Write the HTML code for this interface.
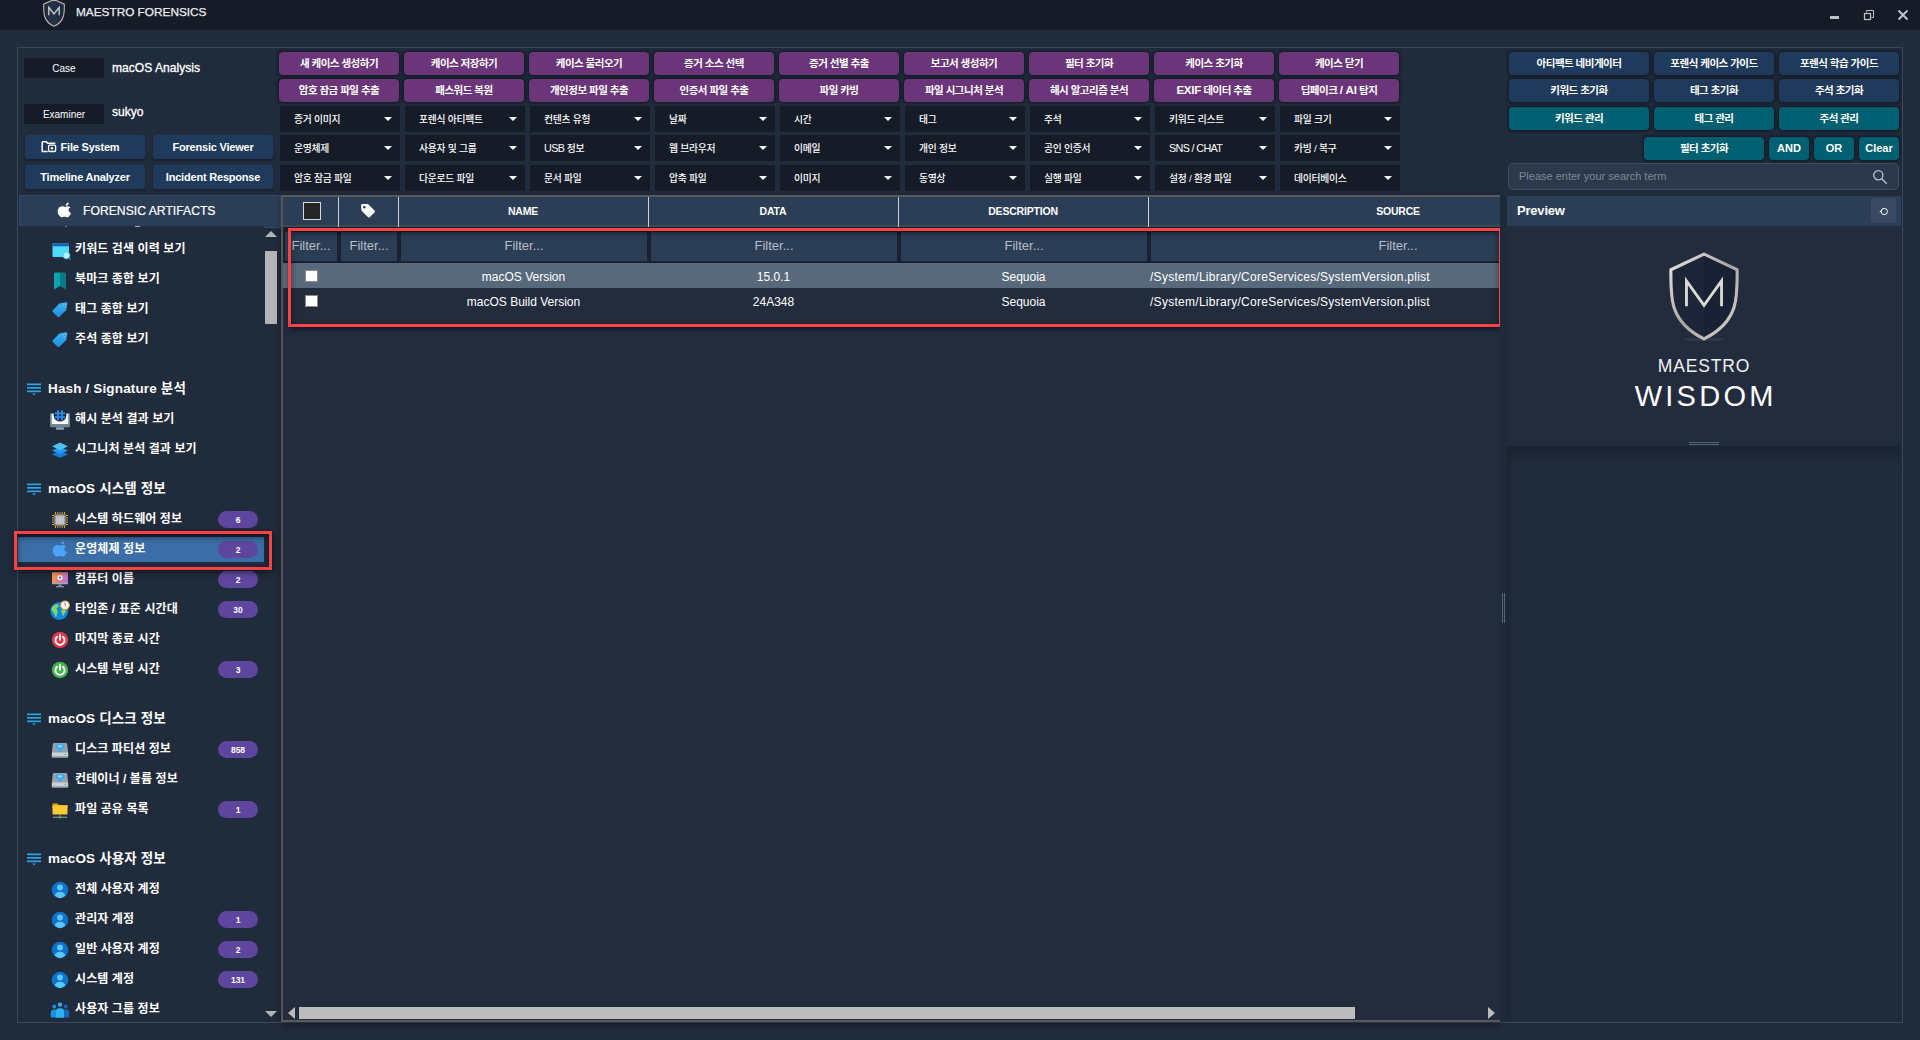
<!DOCTYPE html>
<html lang="ko">
<head>
<meta charset="utf-8">
<title>MAESTRO FORENSICS</title>
<style>
*{box-sizing:border-box;margin:0;padding:0}
html,body{width:1920px;height:1040px;overflow:hidden;background:#202b3b;}
body{font-family:"Liberation Sans","Noto Sans CJK KR",sans-serif;color:#fff;position:relative;font-size:12px}
.abs{position:absolute}
#titlebar{left:0;top:0;width:1920px;height:30px;background:#161b28}
#brand{left:76px;top:4.3px;height:16px;line-height:16px;font-size:11.8px;letter-spacing:0;color:#eceef1;white-space:nowrap;-webkit-text-stroke:0.25px #eceef1}
#frame{left:17px;top:47px;width:1886px;height:976px;border:1px solid #384759}
/* case info */
.lbl{background:#161b28;width:80px;height:20px;line-height:21px;text-align:center;font-size:10px;color:#fff}
.val{font-size:12.1px;font-weight:normal;-webkit-text-stroke:0.3px #fff;color:#fff;line-height:16px;white-space:nowrap}
/* buttons */
.btn{box-shadow:0 0 3px 0.3px rgba(8,12,20,.6);height:23px;line-height:23px;text-align:center;border-radius:4px;font-weight:bold;font-size:10.5px;color:#fff;white-space:nowrap;letter-spacing:-0.5px}
.pur{background:#6a3579;width:120px}
.navy{background:#203a5c}
.teal{background:#015f72}
.nb{background:#203a5c;width:120px;height:24px;line-height:24px;border-radius:3px;font-size:11px;font-weight:bold;text-align:center;box-shadow:0 2px 2px rgba(0,0,0,.25);letter-spacing:-0.2px}
.dd{background:#161b28;width:120px;height:26px;line-height:27.5px;padding-left:14px;font-size:9.8px;font-weight:500;color:#fff;letter-spacing:-0.25px;white-space:nowrap}
.dd:after{content:"";position:absolute;right:8.5px;top:11px;border-left:4px solid transparent;border-right:4px solid transparent;border-top:4.5px solid #fff}
.it{font-size:12px;font-weight:bold;line-height:20px;white-space:nowrap;color:#fff;letter-spacing:0.1px}
.gh{font-size:13.5px;font-weight:bold;line-height:23px;white-space:nowrap;color:#fff;letter-spacing:0.15px}
.bd{width:40px;height:17px;border-radius:9px;background:#5e469e;font-size:8.5px;font-weight:bold;text-align:center;line-height:18.5px;color:#fff}
.th{font-size:10.5px;font-weight:bold;line-height:16px;text-align:center;color:#fff;white-space:nowrap;letter-spacing:-0.2px}
.fl{font-size:13px;line-height:16px;text-align:center;color:#b8bec7;white-space:nowrap;overflow:visible}
.td{font-size:12px;line-height:20px;color:#fff;white-space:nowrap}
.lat{letter-spacing:0;font-size:11px}
.L{font-size:10.8px;letter-spacing:-0.65px;line-height:0}
.L2{font-size:11.6px;letter-spacing:-0.3px;line-height:0;position:relative;top:-0.5px}
</style>
</head>
<body>
<div id="titlebar" class="abs"></div>
<svg class="abs" style="left:42px;top:-2px" width="24" height="30" viewBox="0 0 24 30"><defs><linearGradient id="tg" x1="0" y1="0" x2="1" y2="0"><stop offset="0" stop-color="#1f2b3f"/><stop offset=".5" stop-color="#243249"/><stop offset="1" stop-color="#1b263a"/></linearGradient></defs><path d="M12 1.500L22.300 6.200c0 3.500.2 8.500-1 12.300C19.900 23 16.500 26.300 12 28.300 7.500 26.300 4.100 23 2.700 18.500 1.500 14.700 1.700 9.700 1.700 6.200z" fill="url(#tg)" stroke="#bdb8b2" stroke-width="1.100"/><path d="M6.800 17.300V9.300l5.200 6.700 5.200-6.700v8" fill="none" stroke="#d4d2cf" stroke-width="1.300"/></svg>
<div id="brand" class="abs">MAESTRO FORENSICS</div>
<div class="abs" style="left:1830px;top:16px;width:9px;height:3px;background:#bfc1c4"></div>
<svg class="abs" style="left:1863px;top:9px" width="12" height="12" viewBox="0 0 12 12"><path d="M3.500 3.500v-2h7v7h-2" fill="none" stroke="#bfc1c4" stroke-width="1"/><rect x="1.500" y="4.500" width="6" height="6" fill="none" stroke="#bfc1c4" stroke-width="1.200"/></svg>
<svg class="abs" style="left:1897px;top:9px" width="12" height="12" viewBox="0 0 12 12"><path d="M1.500 1.500l9 9M10.500 1.500l-9 9" stroke="#c4c6c9" stroke-width="1.900"/></svg>
<div id="frame" class="abs"></div>
<!--TOP-->
<div class="abs lbl" style="left:24px;top:58px">Case</div>
<div class="abs val" style="left:112px;top:60px">macOS Analysis</div>
<div class="abs lbl" style="left:24px;top:104px">Examiner</div>
<div class="abs val" style="left:112px;top:104px">sukyo</div>
<div class="abs nb" style="left:25px;top:135px;padding-right:10px;"><svg width="16" height="12" viewBox="0 0 16 12" style="vertical-align:-2px;margin-right:4px"><path d="M1.2 0.8h4.2l1.3 1.4h7.6M1.2 0.8v9.8h5.5" fill="none" stroke="#fff" stroke-width="1.5"/><rect x="7.6" y="4.2" width="7" height="6.3" rx="1" fill="none" stroke="#fff" stroke-width="1.3"/><circle cx="11" cy="7.3" r="1.2" fill="#fff"/></svg>File System</div>
<div class="abs nb" style="left:153px;top:135px;">Forensic Viewer</div>
<div class="abs nb" style="left:25px;top:165px;">Timeline Analyzer</div>
<div class="abs nb" style="left:153px;top:165px;">Incident Response</div>
<div class="abs btn pur" style="left:279px;top:52px">새 케이스 생성하기</div>
<div class="abs btn pur" style="left:404px;top:52px">케이스 저장하기</div>
<div class="abs btn pur" style="left:529px;top:52px">케이스 불러오기</div>
<div class="abs btn pur" style="left:654px;top:52px">증거 소스 선택</div>
<div class="abs btn pur" style="left:779px;top:52px">증거 선별 추출</div>
<div class="abs btn pur" style="left:904px;top:52px">보고서 생성하기</div>
<div class="abs btn pur" style="left:1029px;top:52px">필터 초기화</div>
<div class="abs btn pur" style="left:1154px;top:52px">케이스 초기화</div>
<div class="abs btn pur" style="left:1279px;top:52px">케이스 닫기</div>
<div class="abs btn pur" style="left:279px;top:79px">암호 잠금 파일 추출</div>
<div class="abs btn pur" style="left:404px;top:79px">패스워드 복원</div>
<div class="abs btn pur" style="left:529px;top:79px">개인정보 파일 추출</div>
<div class="abs btn pur" style="left:654px;top:79px">인증서 파일 추출</div>
<div class="abs btn pur" style="left:779px;top:79px">파일 카빙</div>
<div class="abs btn pur" style="left:904px;top:79px">파일 시그니처 분석</div>
<div class="abs btn pur" style="left:1029px;top:79px">해시 알고리즘 분석</div>
<div class="abs btn pur" style="left:1154px;top:79px"><span class=L2>EXIF</span> 데이터 추출</div>
<div class="abs btn pur" style="left:1279px;top:79px">딥페이크 <span class=L2>/ AI</span> 탐지</div>
<div class="abs dd" style="left:280px;top:106px">증거 이미지</div>
<div class="abs dd" style="left:405px;top:106px">포렌식 아티팩트</div>
<div class="abs dd" style="left:530px;top:106px">컨텐츠 유형</div>
<div class="abs dd" style="left:655px;top:106px">날짜</div>
<div class="abs dd" style="left:780px;top:106px">시간</div>
<div class="abs dd" style="left:905px;top:106px">태그</div>
<div class="abs dd" style="left:1030px;top:106px">주석</div>
<div class="abs dd" style="left:1155px;top:106px">키워드 리스트</div>
<div class="abs dd" style="left:1280px;top:106px">파일 크기</div>
<div class="abs dd" style="left:280px;top:135px">운영체제</div>
<div class="abs dd" style="left:405px;top:135px">사용자 및 그룹</div>
<div class="abs dd" style="left:530px;top:135px"><span class=L>USB</span> 정보</div>
<div class="abs dd" style="left:655px;top:135px">웹 브라우저</div>
<div class="abs dd" style="left:780px;top:135px">이메일</div>
<div class="abs dd" style="left:905px;top:135px">개인 정보</div>
<div class="abs dd" style="left:1030px;top:135px">공인 인증서</div>
<div class="abs dd" style="left:1155px;top:135px"><span class=L>SNS / CHAT</span></div>
<div class="abs dd" style="left:1280px;top:135px">카빙 / 복구</div>
<div class="abs dd" style="left:280px;top:165px">암호 잠금 파일</div>
<div class="abs dd" style="left:405px;top:165px">다운로드 파일</div>
<div class="abs dd" style="left:530px;top:165px">문서 파일</div>
<div class="abs dd" style="left:655px;top:165px">압축 파일</div>
<div class="abs dd" style="left:780px;top:165px">이미지</div>
<div class="abs dd" style="left:905px;top:165px">동영상</div>
<div class="abs dd" style="left:1030px;top:165px">실행 파일</div>
<div class="abs dd" style="left:1155px;top:165px">설정 / 환경 파일</div>
<div class="abs dd" style="left:1280px;top:165px">데이터베이스</div>
<div class="abs btn navy" style="left:1509px;top:52px;width:140px">아티팩트 네비게이터</div>
<div class="abs btn navy" style="left:1654px;top:52px;width:120px">포렌식 케이스 가이드</div>
<div class="abs btn navy" style="left:1779px;top:52px;width:120px">포렌식 학습 가이드</div>
<div class="abs btn navy" style="left:1509px;top:79px;width:140px">키워드 초기화</div>
<div class="abs btn navy" style="left:1654px;top:79px;width:120px">태그 초기화</div>
<div class="abs btn navy" style="left:1779px;top:79px;width:120px">주석 초기화</div>
<div class="abs btn teal" style="left:1509px;top:107px;width:140px">키워드 관리</div>
<div class="abs btn teal" style="left:1654px;top:107px;width:120px">태그 관리</div>
<div class="abs btn teal" style="left:1779px;top:107px;width:120px">주석 관리</div>
<div class="abs btn teal" style="left:1644px;top:137px;width:120px">필터 초기화</div>
<div class="abs btn teal lat" style="left:1769px;top:137px;width:40px">AND</div>
<div class="abs btn teal lat" style="left:1814px;top:137px;width:40px">OR</div>
<div class="abs btn teal lat" style="left:1859px;top:137px;width:40px">Clear</div>
<div class="abs" id="search" style="left:1508px;top:163px;width:391px;height:27px;border:1px solid #3d4b5f;border-radius:5px;background:#2c394c"><span class="abs" style="left:10px;top:5px;font-size:11px;color:#7e8896;line-height:14px">Please enter your search term</span><svg class="abs" style="left:363px;top:5px" width="16" height="16" viewBox="0 0 16 16"><circle cx="6.3" cy="6.3" r="4.6" fill="none" stroke="#b7c4d6" stroke-width="1.3"/><path d="M9.7 9.7L14.3 14.3" stroke="#b7c4d6" stroke-width="1.4" stroke-linecap="round"/></svg></div>
<!--/TOP-->
<!--SIDEBAR-->
<div class="abs" id="side" style="left:18px;top:195px;width:263px;height:827px;overflow:hidden">
<div class="abs" style="left:1px;top:0;width:262px;height:33px;background:#2b3e55;border:1px solid #30486a"></div><div class="abs" style="left:0;top:31px;width:246px;height:4px;background:#202b3b"></div>
<svg class="abs" style="left:38px;top:6px" width="17" height="18" viewBox="0 0 18 18"><path d="M12.3 1c.1 1-.3 1.900-.9 2.600-.6.700-1.500 1.200-2.400 1.100-.1-.9.400-1.900.9-2.500C10.500 1.500 11.500 1.050 12.300 1zM15 12.700c-.4 1-.650 1.400-1.200 2.300-.750 1.200-1.850 2.650-3.200 2.650-1.200 0-1.500-.8-3.100-.750-1.600 0-1.950.8-3.150.750-1.350 0-2.350-1.300-3.100-2.500C-.9 11.900-.1 7.500 2.300 6c1-.650 2.200-.9 3.300-.6.8.2 1.400.6 2.300.6.850 0 1.350-.4 2.600-.7 1-.2 2.500.1 3.600 1.200-3 1.800-2.400 5.300.9 6.200z" transform="translate(1.800,0) scale(0.950)" fill="#fff"/></svg>
<div class="abs" style="left:65px;top:8px;font-size:12.2px;line-height:16px;color:#fff;white-space:nowrap;-webkit-text-stroke:0.2px #fff">FORENSIC ARTIFACTS</div>
<div class="abs" style="left:47px;top:31px;width:2px;height:1px;background:#8aa;opacity:.7"></div><div class="abs" style="left:117px;top:31px;width:5px;height:1px;background:#ccd;opacity:.8"></div>
<div class="abs" style="left:33px;top:45.5px;width:19px;height:18px"><svg width="19" height="18" viewBox="0 0 19 18" style="overflow:visible"><rect x="1.500" y="2.500" width="16.500" height="13.500" rx=".8" fill="#4fdcfb"/><rect x="1.500" y="2.500" width="16.500" height="2.800" fill="#1a62b4"/><circle cx="15.500" cy="14.500" r="3.300" fill="#b4f0fb" stroke="#5cc9ea" stroke-width=".8"/><path d="M17.800 16.800l1.500 1.500" stroke="#2f8fd0" stroke-width="1.200" stroke-linecap="round"/></svg></div>
<div class="abs it" style="left:57px;top:44px">키워드 검색 이력 보기</div>
<div class="abs" style="left:33px;top:75.5px;width:18px;height:18px"><svg width="18" height="19" viewBox="0 0 18 19"><path d="M4 1.500h5V15l-6 3.500V2.500a1 1 0 0 1 1-1z" fill="#0ea3b1"/><path d="M9 1.500h5a1 1 0 0 1 1 1V18.500L9 15z" fill="#067a87"/></svg></div>
<div class="abs it" style="left:57px;top:74px">북마크 종합 보기</div>
<div class="abs" style="left:33px;top:105.5px;width:18px;height:18px"><svg width="18" height="18" viewBox="0 0 18 18"><defs><linearGradient id="tgg" x1="0" y1="0" x2="0" y2="1"><stop offset="0" stop-color="#3ab4f2"/><stop offset="1" stop-color="#1c8ee0"/></linearGradient></defs><path d="M9.200 2.200l6-0.900a1 1 0 0 1 1.100 1.100l-0.900 6a1.500 1.500 0 0 1-.4.800l-6.600 6.600a1.300 1.300 0 0 1-1.800 0L1.800 11a1.300 1.300 0 0 1 0-1.800L8.400 2.600a1.500 1.500 0 0 1 .8-.4z" fill="url(#tgg)"/><circle cx="13.700" cy="4.300" r="1.100" fill="#1e6fb0" stroke="#bfe6fb" stroke-width=".5"/></svg></div>
<div class="abs it" style="left:57px;top:104px">태그 종합 보기</div>
<div class="abs" style="left:33px;top:135.5px;width:18px;height:18px"><svg width="18" height="18" viewBox="0 0 18 18"><defs><linearGradient id="tgg" x1="0" y1="0" x2="0" y2="1"><stop offset="0" stop-color="#3ab4f2"/><stop offset="1" stop-color="#1c8ee0"/></linearGradient></defs><path d="M9.200 2.200l6-0.900a1 1 0 0 1 1.100 1.100l-0.900 6a1.500 1.500 0 0 1-.4.800l-6.600 6.600a1.300 1.300 0 0 1-1.800 0L1.800 11a1.300 1.300 0 0 1 0-1.800L8.400 2.600a1.500 1.500 0 0 1 .8-.4z" fill="url(#tgg)"/><circle cx="13.700" cy="4.300" r="1.100" fill="#1e6fb0" stroke="#bfe6fb" stroke-width=".5"/></svg></div>
<div class="abs it" style="left:57px;top:134px">주석 종합 보기</div>
<div class="abs" style="left:8px;top:186px;width:16px;height:16px"><svg width="16" height="16" viewBox="0 0 16 16"><rect x="1" y="2.5" width="14" height="1.7" fill="#2ba3f0"/><rect x="1" y="6" width="14" height="1.7" fill="#2ba3f0"/><rect x="1" y="9.5" width="14" height="1.7" fill="#2ba3f0"/><path d="M6.2 12.6h3.6L8 14.6z" fill="#2ba3f0"/></svg></div>
<div class="abs gh" style="left:30px;top:182px">Hash / Signature 분석</div>
<div class="abs" style="left:32px;top:215.5px;width:20px;height:18px"><svg width="20" height="21" viewBox="0 0 20 21" style="position:absolute;top:-0.500px;left:0"><rect x="0" y="3" width="20" height="14.200" rx="1.300" fill="#6f8694"/><rect x="1.800" y="4.200" width="16.400" height="9.800" fill="#fff"/><circle cx="10" cy="5.200" r="6.400" fill="#202b3b"/><path d="M6.500 17.200h7l.8 2.600H5.700z" fill="#8fa3ae"/><path d="M8 .2v10M12 .2v10M4.800 3.300h10.400M4.800 7.100h10.400" stroke="#2b8ff2" stroke-width="1.800"/></svg></div>
<div class="abs it" style="left:57px;top:214px">해시 분석 결과 보기</div>
<div class="abs" style="left:33px;top:245.5px;width:18px;height:18px"><svg width="18" height="18" viewBox="0 0 18 18"><path d="M9 9.500l8 3.700-8 3.800-8-3.800z" fill="#1976d2"/><path d="M9 5.800l8 3.800-8 3.800-8-3.800z" fill="#2196f3"/><path d="M9 1.400l8 3.900-8 3.900-8-3.900z" fill="#4fc0f5"/></svg></div>
<div class="abs it" style="left:57px;top:244px">시그니처 분석 결과 보기</div>
<div class="abs" style="left:8px;top:286px;width:16px;height:16px"><svg width="16" height="16" viewBox="0 0 16 16"><rect x="1" y="2.5" width="14" height="1.7" fill="#2ba3f0"/><rect x="1" y="6" width="14" height="1.7" fill="#2ba3f0"/><rect x="1" y="9.5" width="14" height="1.7" fill="#2ba3f0"/><path d="M6.2 12.6h3.6L8 14.6z" fill="#2ba3f0"/></svg></div>
<div class="abs gh" style="left:30px;top:282px">macOS 시스템 정보</div>
<div class="abs" style="left:33px;top:315.5px;width:18px;height:18px"><svg width="18" height="18" viewBox="0 0 18 18"><g stroke="#d9a514" stroke-width="1"><path d="M4.5 1v16M6.75 1v16M9 1v16M11.25 1v16M13.5 1v16M1 4.5h16M1 6.75h16M1 9h16M1 11.25h16M1 13.5h16"/></g><rect x="3" y="3" width="12" height="12" rx="1.2" fill="#7d7f84"/><rect x="4.6" y="4.6" width="8.8" height="8.8" fill="#c2c4c8"/></svg></div>
<div class="abs it" style="left:57px;top:314px">시스템 하드웨어 정보</div>
<div class="abs bd" style="left:200px;top:316px">6</div>
<div class="abs" style="left:0;top:342px;width:246px;height:25px;background:#3b6ea6"></div>
<div class="abs" style="left:33px;top:344.5px;width:18px;height:18px"><svg width="18" height="18" viewBox="0 0 18 18"><path d="M12.3 1c.1 1-.3 1.9-.9 2.6-.6.7-1.500 1.200-2.400 1.100-.1-.9.400-1.900.9-2.500C10.500 1.500 11.500 1.050 12.300 1zM15 12.700c-.400 1-.650 1.400-1.200 2.300-.750 1.200-1.850 2.650-3.200 2.650-1.200 0-1.500-.8-3.100-.75-1.600 0-1.950.8-3.150.75-1.350 0-2.350-1.300-3.100-2.500C-.9 11.900-.1 7.500 2.300 6c1-.65 2.200-.9 3.300-.6.800.2 1.400.6 2.300.6.850 0 1.350-.4 2.600-.7 1-.2 2.500.1 3.600 1.200-3 1.800-2.400 5.300.9 6.200z" transform="translate(1.800,0) scale(0.95)" fill="#4da3f7"/></svg></div>
<div class="abs it" style="left:57px;top:344px">운영체제 정보</div>
<div class="abs bd" style="left:200px;top:346px">2</div>
<div class="abs" style="left:33px;top:376.3px;width:18px;height:18px"><svg width="18" height="18" viewBox="0 0 18 18"><defs><linearGradient id="cg" x1="0" y1=".3" x2="1" y2=".7"><stop offset="0" stop-color="#ff9a3a"/><stop offset=".55" stop-color="#e27f86"/><stop offset="1" stop-color="#b36ee8"/></linearGradient></defs><rect x="1" y="1.500" width="16" height="11.800" rx=".8" fill="#a3abb3"/><rect x="1" y="1.500" width="16" height="10.300" rx=".6" fill="url(#cg)"/><circle cx="9" cy="6.600" r="2.700" fill="#f1f2f5"/><circle cx="9" cy="6.600" r="1.100" fill="#3d7fd6"/><path d="M7.500 13.300h3l.4 2H7.100z" fill="#7c858f"/><rect x="5" y="15.200" width="8" height="1.100" fill="#9aa3ad"/></svg></div>
<div class="abs it" style="left:57px;top:374px">컴퓨터 이름</div>
<div class="abs bd" style="left:200px;top:376px">2</div>
<div class="abs" style="left:32px;top:405.5px;width:20px;height:18px"><svg width="20" height="20" viewBox="0 0 20 20" style="position:absolute;top:-1px;left:0"><circle cx="9.300" cy="11" r="9" fill="#0e86e2"/><path d="M2.500 6.500c1.500-1.500 3.800-2.600 5.600-2 1.400.6.600 2.200-.5 3-.9.700-1.400 1.400-.6 2.400.9 1 .9 2.300.2 3.500-.4.800-.2 2.500-.8 3.400-.7.400-1.500-.8-1.800-2.300C4.300 12.800 2 11.700 1.300 9.800zM11 10.500c1.200-.9 3.200-.6 4.600-.2.800.3.300 1.500-.3 2.300-.8 1-1.400 2.600-2.300 3.400-.9-.6-.8-2-.9-3.100-.1-1-1.800-1.600-1.100-2.400z" fill="#7fd65a"/><circle cx="15" cy="5.300" r="4.300" fill="#fbfbfb" stroke="#e8a23c" stroke-width="1.100"/><path d="M15 2.700v2.600" stroke="#444" stroke-width=".7" fill="none"/><path d="M15 5.300l1.400 .9" stroke="#e53935" stroke-width=".8"/></svg></div>
<div class="abs it" style="left:57px;top:404px">타임존 / 표준 시간대</div>
<div class="abs bd" style="left:200px;top:406px">30</div>
<div class="abs" style="left:33px;top:435.5px;width:18px;height:18px"><svg width="18" height="18" viewBox="0 0 18 18"><circle cx="9" cy="9" r="8.200" fill="#e5344a"/><path d="M6 5.800a4.600 4.600 0 1 0 6 0" fill="none" stroke="#fff" stroke-width="1.900" stroke-linecap="round"/><path d="M9 3.800v5" stroke="#fff" stroke-width="1.900" stroke-linecap="round"/></svg></div>
<div class="abs it" style="left:57px;top:434px">마지막 종료 시간</div>
<div class="abs" style="left:33px;top:465.5px;width:18px;height:18px"><svg width="18" height="18" viewBox="0 0 18 18"><circle cx="9" cy="9" r="8.200" fill="#3fb54a"/><path d="M6 5.800a4.600 4.600 0 1 0 6 0" fill="none" stroke="#fff" stroke-width="1.900" stroke-linecap="round"/><path d="M9 3.800v5" stroke="#fff" stroke-width="1.900" stroke-linecap="round"/></svg></div>
<div class="abs it" style="left:57px;top:464px">시스템 부팅 시간</div>
<div class="abs bd" style="left:200px;top:466px">3</div>
<div class="abs" style="left:8px;top:516px;width:16px;height:16px"><svg width="16" height="16" viewBox="0 0 16 16"><rect x="1" y="2.5" width="14" height="1.7" fill="#2ba3f0"/><rect x="1" y="6" width="14" height="1.7" fill="#2ba3f0"/><rect x="1" y="9.5" width="14" height="1.7" fill="#2ba3f0"/><path d="M6.2 12.6h3.6L8 14.6z" fill="#2ba3f0"/></svg></div>
<div class="abs gh" style="left:30px;top:512px">macOS 디스크 정보</div>
<div class="abs" style="left:33px;top:545.5px;width:18px;height:18px"><svg width="18" height="18" viewBox="0 0 18 18"><path d="M3 2h12a1.200 1.200 0 0 1 1.200 1l1 9H.8l1-9A1.200 1.200 0 0 1 3 2z" fill="#98a1a9"/><rect x=".8" y="11.500" width="16.400" height="5" rx="1" fill="#ccd1d6"/><rect x=".8" y="15.300" width="16.400" height="1.200" rx=".5" fill="#8e969e"/><ellipse cx="9" cy="5.600" rx="4.600" ry="2.700" fill="#35aef3"/><ellipse cx="9" cy="5.300" rx="2.400" ry="1.100" fill="#9bdcff"/><path d="M7.800 7.500h2.400l.4 3.500H7.400z" fill="#35aef3"/><circle cx="14.300" cy="13.500" r=".8" fill="#3fc05a"/></svg></div>
<div class="abs it" style="left:57px;top:544px">디스크 파티션 정보</div>
<div class="abs bd" style="left:200px;top:546px">858</div>
<div class="abs" style="left:33px;top:575.5px;width:18px;height:18px"><svg width="18" height="18" viewBox="0 0 18 18"><path d="M3 2h12a1.200 1.200 0 0 1 1.200 1l1 9H.8l1-9A1.200 1.200 0 0 1 3 2z" fill="#98a1a9"/><rect x=".8" y="11.500" width="16.400" height="5" rx="1" fill="#ccd1d6"/><rect x=".8" y="15.300" width="16.400" height="1.200" rx=".5" fill="#8e969e"/><ellipse cx="9" cy="5.600" rx="4.600" ry="2.700" fill="#35aef3"/><ellipse cx="9" cy="5.300" rx="2.400" ry="1.100" fill="#9bdcff"/><path d="M7.800 7.500h2.400l.4 3.500H7.400z" fill="#35aef3"/><circle cx="14.300" cy="13.500" r=".8" fill="#3fc05a"/></svg></div>
<div class="abs it" style="left:57px;top:574px">컨테이너 / 볼륨 정보</div>
<div class="abs" style="left:33px;top:605.5px;width:18px;height:18px"><svg width="18" height="18" viewBox="0 0 18 18"><path d="M1.500 2.500h5l1.500 1.500h8.500v3h-15z" fill="#e0a21a"/><rect x="1.500" y="4.500" width="15" height="9" rx=".8" fill="#fcc934"/><path d="M9 13.500v2.200" stroke="#4caf50" stroke-width="1.200"/><path d="M2 16.300h14" stroke="#8d969e" stroke-width="1.200"/><circle cx="9" cy="16.300" r="1.200" fill="#4caf50"/></svg></div>
<div class="abs it" style="left:57px;top:604px">파일 공유 목록</div>
<div class="abs bd" style="left:200px;top:606px">1</div>
<div class="abs" style="left:8px;top:656px;width:16px;height:16px"><svg width="16" height="16" viewBox="0 0 16 16"><rect x="1" y="2.5" width="14" height="1.7" fill="#2ba3f0"/><rect x="1" y="6" width="14" height="1.7" fill="#2ba3f0"/><rect x="1" y="9.5" width="14" height="1.7" fill="#2ba3f0"/><path d="M6.2 12.6h3.6L8 14.6z" fill="#2ba3f0"/></svg></div>
<div class="abs gh" style="left:30px;top:652px">macOS 사용자 정보</div>
<div class="abs" style="left:33px;top:685.5px;width:18px;height:18px"><svg width="18" height="18" viewBox="0 0 18 18"><circle cx="9" cy="9" r="8.300" fill="#0d72c9"/><circle cx="9" cy="6.600" r="3" fill="#5ac6f8"/><path d="M3.600 14.600c.6-2.600 2.800-3.900 5.400-3.900s4.800 1.300 5.400 3.900A8.200 8.200 0 0 1 9 17.200a8.200 8.200 0 0 1-5.400-2.600z" fill="#5ac6f8"/></svg></div>
<div class="abs it" style="left:57px;top:684px">전체 사용자 계정</div>
<div class="abs" style="left:33px;top:715.5px;width:18px;height:18px"><svg width="18" height="18" viewBox="0 0 18 18"><circle cx="9" cy="9" r="8.300" fill="#0d72c9"/><circle cx="9" cy="6.600" r="3" fill="#5ac6f8"/><path d="M3.600 14.600c.6-2.600 2.800-3.900 5.400-3.900s4.800 1.300 5.400 3.900A8.200 8.200 0 0 1 9 17.200a8.200 8.200 0 0 1-5.400-2.600z" fill="#5ac6f8"/></svg></div>
<div class="abs it" style="left:57px;top:714px">관리자 계정</div>
<div class="abs bd" style="left:200px;top:716px">1</div>
<div class="abs" style="left:33px;top:745.5px;width:18px;height:18px"><svg width="18" height="18" viewBox="0 0 18 18"><circle cx="9" cy="9" r="8.300" fill="#0d72c9"/><circle cx="9" cy="6.600" r="3" fill="#5ac6f8"/><path d="M3.600 14.600c.6-2.600 2.800-3.900 5.400-3.900s4.800 1.300 5.400 3.900A8.200 8.200 0 0 1 9 17.200a8.200 8.200 0 0 1-5.400-2.600z" fill="#5ac6f8"/></svg></div>
<div class="abs it" style="left:57px;top:744px">일반 사용자 계정</div>
<div class="abs bd" style="left:200px;top:746px">2</div>
<div class="abs" style="left:33px;top:775.5px;width:18px;height:18px"><svg width="18" height="18" viewBox="0 0 18 18"><circle cx="9" cy="9" r="8.300" fill="#0d72c9"/><circle cx="9" cy="6.600" r="3" fill="#5ac6f8"/><path d="M3.600 14.600c.6-2.600 2.800-3.900 5.400-3.900s4.800 1.300 5.400 3.900A8.200 8.200 0 0 1 9 17.200a8.200 8.200 0 0 1-5.400-2.600z" fill="#5ac6f8"/></svg></div>
<div class="abs it" style="left:57px;top:774px">시스템 계정</div>
<div class="abs bd" style="left:200px;top:776px">131</div>
<div class="abs" style="left:32px;top:805.5px;width:20px;height:18px"><svg width="20" height="18" viewBox="0 0 20 18"><circle cx="4.300" cy="5.500" r="2" fill="#1793e6"/><circle cx="15.700" cy="5.500" r="2" fill="#1667b8"/><path d="M0.800 16.500v-5a3 3 0 0 1 3-3h1a3 3 0 0 1 3 3v5z" fill="#1793e6"/><path d="M12.200 16.500v-5a3 3 0 0 1 3-3h1a3 3 0 0 1 3 3v5z" fill="#1667b8"/><circle cx="10" cy="3.600" r="2.200" fill="#2db2f0"/><path d="M6 16.800v-6.500a3 3 0 0 1 3-3h2a3 3 0 0 1 3 3v6.500z" fill="#2db2f0"/></svg></div>
<div class="abs it" style="left:57px;top:804px">사용자 그룹 정보</div>
<div class="abs" style="left:247px;top:56px;width:12px;height:73px;background:#b4b4b4"></div>
<div class="abs" style="left:247px;top:36px;width:0;height:0;border-left:6px solid transparent;border-right:6px solid transparent;border-bottom:6px solid #b4b4b4"></div>
<div class="abs" style="left:247px;top:816px;width:0;height:0;border-left:6px solid transparent;border-right:6px solid transparent;border-top:6px solid #b4b4b4"></div>
</div>
<div class="abs" style="left:14px;top:531px;width:258px;height:39px;border:3.3px solid #fb4347;box-shadow:1px 2px 6px rgba(0,0,0,.5),inset 0 3px 6px rgba(0,0,0,.55)"></div>
<!--/SIDEBAR-->
<!--TABLE-->
<div class="abs" id="tbl" style="left:281px;top:195px;width:1219px;height:827px;background:#232c3d;border-left:2px solid #565656;border-top:2px solid #595957;border-bottom:2px solid #5a5a5a;overflow:hidden;box-shadow:0 3px 6px rgba(0,0,0,.35)">
<div class="abs" style="left:0;top:0;width:1217px;height:28px;background:#2b3e55"></div><div class="abs" style="left:0;top:28px;width:1217px;height:3px;background:#414a59"></div>
<div class="abs" style="left:55px;top:0;width:1px;height:31px;background:#cfd0d2"></div>
<div class="abs" style="left:115px;top:0;width:1px;height:31px;background:#cfd0d2"></div>
<div class="abs" style="left:365px;top:0;width:1px;height:31px;background:#cfd0d2"></div>
<div class="abs" style="left:615px;top:0;width:1px;height:31px;background:#cfd0d2"></div>
<div class="abs" style="left:865px;top:0;width:1px;height:31px;background:#cfd0d2"></div>
<div class="abs" style="left:20px;top:5px;width:18px;height:18px;background:#262626;border:1px solid #d8d8d8"></div>
<svg class="abs" style="left:77px;top:6px" width="16" height="16" viewBox="0 0 16 16"><path d="M1 2.2A1.200 1.200 0 0 1 2.200 1h5.300a1.500 1.500 0 0 1 1 .4l6 6a1.400 1.400 0 0 1 0 2l-4.600 4.600a1.400 1.400 0 0 1-2 0l-6-6a1.500 1.500 0 0 1-.4-1z" fill="#fff"/><circle cx="4.300" cy="4.300" r="1.300" fill="#2b3e55"/></svg>
<div class="abs th" style="left:140px;top:6px;width:200px">NAME</div>
<div class="abs th" style="left:390px;top:6px;width:200px">DATA</div>
<div class="abs th" style="left:640px;top:6px;width:200px">DESCRIPTION</div>
<div class="abs th" style="left:1015px;top:6px;width:200px">SOURCE</div>
<div class="abs" style="left:0;top:30px;width:1217px;height:37px;background:#1a2131"></div>
<div class="abs" style="left:2px;top:35px;width:52px;height:29px;background:#2b3e55"></div>
<div class="abs fl" style="left:-12.0px;top:41px;width:80px">Filter...</div>
<div class="abs" style="left:58px;top:35px;width:56px;height:29px;background:#2b3e55"></div>
<div class="abs fl" style="left:46.0px;top:41px;width:80px">Filter...</div>
<div class="abs" style="left:118px;top:35px;width:246px;height:29px;background:#2b3e55"></div>
<div class="abs fl" style="left:201.0px;top:41px;width:80px">Filter...</div>
<div class="abs" style="left:368px;top:35px;width:246px;height:29px;background:#2b3e55"></div>
<div class="abs fl" style="left:451.0px;top:41px;width:80px">Filter...</div>
<div class="abs" style="left:618px;top:35px;width:246px;height:29px;background:#2b3e55"></div>
<div class="abs fl" style="left:701.0px;top:41px;width:80px">Filter...</div>
<div class="abs" style="left:868px;top:35px;width:349px;height:29px;background:#2b3e55"></div>
<div class="abs fl" style="left:1075px;top:41px;width:80px">Filter...</div>
<div class="abs" style="left:0;top:66px;width:1217px;height:25px;background:#59697c"></div>
<div class="abs" style="left:21.5px;top:72.5px;width:13px;height:12px;background:#fff;border:1px solid #8f8a86"></div>
<div class="abs td" style="left:120.5px;top:70px;width:240px;text-align:center">macOS Version</div>
<div class="abs td" style="left:370.5px;top:70px;width:240px;text-align:center">15.0.1</div>
<div class="abs td" style="left:620.5px;top:70px;width:240px;text-align:center">Sequoia</div>
<div class="abs td" style="left:867px;top:70px;letter-spacing:0.275px">/System/Library/CoreServices/SystemVersion.plist</div>
<div class="abs" style="left:21.5px;top:97.5px;width:13px;height:12px;background:#fff;border:1px solid #8f8a86"></div>
<div class="abs td" style="left:120.5px;top:95px;width:240px;text-align:center">macOS Build Version</div>
<div class="abs td" style="left:370.5px;top:95px;width:240px;text-align:center">24A348</div>
<div class="abs td" style="left:620.5px;top:95px;width:240px;text-align:center">Sequoia</div>
<div class="abs td" style="left:867px;top:95px;letter-spacing:0.275px">/System/Library/CoreServices/SystemVersion.plist</div>
<div class="abs" style="left:16px;top:810px;width:1056px;height:12px;background:#bcbcbc"></div>
<div class="abs" style="left:5px;top:810px;width:0;height:0;border-top:6px solid transparent;border-bottom:6px solid transparent;border-right:7px solid #bcbcbc"></div>
<div class="abs" style="left:1205px;top:810px;width:0;height:0;border-top:6px solid transparent;border-bottom:6px solid transparent;border-left:7px solid #bcbcbc"></div>
</div>
<div class="abs" style="left:288px;top:228px;width:1214px;height:99px;border:3.3px solid #fb4347;box-shadow:1px 2px 6px rgba(0,0,0,.5),inset 0 2px 6px rgba(0,0,0,.5)"></div>
<!--/TABLE-->
<!--RIGHT-->
<div class="abs" style="left:1500px;top:196px;width:7px;height:826px;background:#1f2a39"></div>
<div class="abs" style="left:1502px;top:593px;width:1px;height:30px;background:#51647a"></div><div class="abs" style="left:1504px;top:593px;width:1px;height:30px;background:#51647a"></div>
<div class="abs" style="left:1507px;top:196px;width:394px;height:30px;background:#2b3e55"></div>
<div class="abs" style="left:1517px;top:203px;font-size:13px;font-weight:bold;line-height:16px;color:#fff;letter-spacing:-0.2px">Preview</div>
<div class="abs" style="left:1871px;top:198px;width:25px;height:25px;background:#39496300;border-radius:3px"></div><div class="abs" style="left:1871px;top:198px;width:25px;height:25px;background:#394963;border-radius:3px"></div>
<svg class="abs" style="left:1877.200px;top:205px" width="13" height="13" viewBox="0 0 13 13"><circle cx="7.300" cy="6.500" r="3.100" fill="none" stroke="#fff" stroke-width="1"/><path d="M2.400 6.500L4.700 5.100v2.800z" fill="#fff"/><path d="M3 6.500h2" stroke="#394963" stroke-width="0"/></svg>
<div class="abs" style="left:1507px;top:226px;width:394px;height:215px;background:#232c3d"></div>
<div class="abs" style="left:1507px;top:441px;width:394px;height:5px;background:#1f2a3a"></div><div class="abs" style="left:1507px;top:446px;width:394px;height:23px;background:linear-gradient(180deg,#1b2432 0,#1c2635 30%,#1f2a39 70%,#202b3b 100%)"></div><div class="abs" style="left:1507px;top:446px;width:8px;height:575px;background:linear-gradient(90deg,rgba(20,28,40,.35) 0,rgba(32,43,59,0) 100%)"></div>
<div class="abs" style="left:1689px;top:442px;width:30px;height:1px;background:#51647a"></div><div class="abs" style="left:1689px;top:444px;width:30px;height:1px;background:#51647a"></div>
<svg class="abs" style="left:1667px;top:252px" width="74" height="90" viewBox="0 0 76 92">
<defs><linearGradient id="sg" x1="0" y1="0" x2="1" y2="1"><stop offset="0" stop-color="#e8e6e3"/><stop offset=".5" stop-color="#a9a5a2"/><stop offset="1" stop-color="#d9d6d2"/></linearGradient></defs>
<ellipse cx="38" cy="89.500" rx="22" ry="1.500" fill="#3a3f48" opacity=".7"/>
<path d="M38 2L72 18c0 10 .5 26-3 38-4.500 15-17 26-31 33C24 82 11.500 71 7 56 3.500 44 4 28 4 18z" fill="#1c2638" stroke="url(#sg)" stroke-width="3.200" stroke-linejoin="round"/>
<path d="M38 4L70 19c0 10 .3 25-3 36.500C63 69 51 80 38 86.500z" fill="#182234"/>
<path d="M20 55.500V29.500l18 25 18-25v26" fill="none" stroke="#dcdad7" stroke-width="2.900" stroke-linejoin="miter"/>
</svg>
<div class="abs" style="left:1507px;top:354.5px;width:394px;text-align:center;font-size:17.5px;line-height:22px;letter-spacing:0.83px;color:#f0f1f3;text-indent:0px">MAESTRO</div>
<div class="abs" style="left:1507px;top:378px;width:394px;text-align:center;font-size:29px;line-height:36px;letter-spacing:3.26px;color:#fff;text-indent:3.26px">WISDOM</div>
<!--/RIGHT-->
</body>
</html>
